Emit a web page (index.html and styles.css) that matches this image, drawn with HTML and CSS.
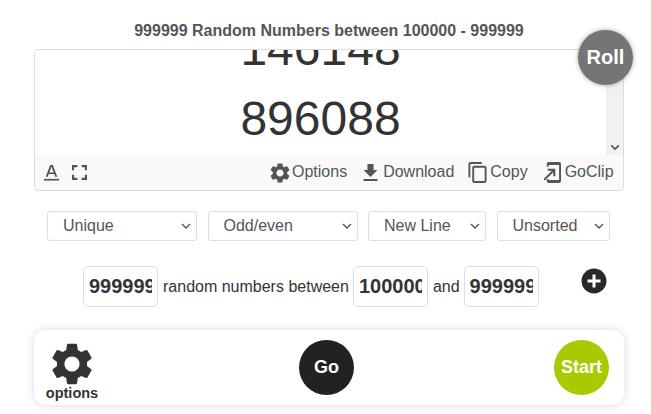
FILE: index.html
```html
<!DOCTYPE html>
<html lang="en">
<head>
    <meta charset="UTF-8">
    <meta name="viewport" content="width=device-width, initial-scale=1.0">
    <title>Random Numbers</title>
    <link rel="stylesheet" href="styles.css">
</head>
<body>
    <div class="page">
        <h1 class="title">999999 Random Numbers between 100000 - 999999</h1>

        <div class="result-card">
            <button class="roll">Roll</button>
            <div class="result-top">
                <div class="numbers">
                    <div>146148</div>
                    <div>896088</div>
                </div>
                <div class="scrollbar">
                    <svg class="scroll-arrow" viewBox="0 0 12 8"><path d="M1.5 1.5 6 6l4.5-4.5" fill="none" stroke="#555" stroke-width="2"/></svg>
                </div>
            </div>
            <div class="toolbar">
                <svg class="icon icon-font" viewBox="1 1 14 15"><path d="M6.8 1 2.6 12h1.900l.9-2.500h5.200l.9 2.500h1.900L9.200 1H6.800zM6 8l2-5.400L10 8H6z"/><path d="M1 14h14v1.600H1z"/></svg>
                <svg class="icon icon-full" viewBox="1 1 14 14"><path d="M1 1h5v2H3v3H1V1zm9 0h5v5h-2V3h-3V1zM1 10h2v3h3v2H1v-5zm12 0h2v5h-5v-2h3v-3z"/></svg>
                <div class="tool tool-first">
                    <svg class="icon icon-gear" viewBox="2 2 20 20"><path d="M19.14 12.94c.04-.3.06-.61.06-.94 0-.32-.02-.64-.07-.94l2.03-1.58c.18-.14.23-.41.12-.61l-1.92-3.32c-.12-.22-.37-.29-.59-.22l-2.39.96c-.5-.38-1.03-.7-1.62-.94L14.4 2.81c-.04-.24-.24-.41-.48-.41h-3.84c-.24 0-.43.17-.47.41L9.25 5.35c-.59.24-1.13.57-1.62.94l-2.39-.96c-.22-.08-.47 0-.59.22L2.74 8.87c-.12.21-.08.47.12.61l2.03 1.58c-.05.3-.09.63-.09.94s.02.64.07.94l-2.03 1.58c-.18.14-.23.41-.12.61l1.92 3.32c.12.22.37.29.59.22l2.39-.96c.5.38 1.03.7 1.62.94l.36 2.54c.05.24.24.41.48.41h3.84c.24 0 .44-.17.47-.41l.36-2.54c.59-.24 1.13-.56 1.62-.94l2.39.96c.22.08.47 0 .59-.22l1.92-3.32c.12-.22.07-.47-.12-.61l-2.01-1.58zM12 15.600c-1.980 0-3.600-1.620-3.600-3.600s1.620-3.600 3.600-3.600 3.600 1.620 3.600 3.600-1.620 3.600-3.600 3.600z"/></svg>
                    <span>Options</span>
                </div>
                <div class="tool tool-down">
                    <svg class="icon icon-down" viewBox="5 3 14 17"><path d="M19 9h-4V3H9v6H5l7 7 7-7zM5 18v2h14v-2H5z"/></svg>
                    <span>Download</span>
                </div>
                <div class="tool tool-copy">
                    <svg class="icon icon-copy" viewBox="2 1 19 22"><path d="M16 1H4c-1.100 0-2 .9-2 2v14h2V3h12V1zm3 4H8c-1.100 0-2 .9-2 2v14c0 1.100.9 2 2 2h11c1.100 0 2-.9 2-2V7c0-1.100-.9-2-2-2zm0 16H8V7h11v14z"/></svg>
                    <span>Copy</span>
                </div>
                <div class="tool">
                    <svg class="icon icon-clip" viewBox="0 0 19 22"><path d="M6 0h11c1.100 0 2 .9 2 2v18c0 1.100-.9 2-2 2H6c-1.100 0-2-.9-2-2v-2h2v1h11V3H6v2H4V2c0-1.100.9-2 2-2z"/><path d="M5 7h8v8h-2.200v-4.300L2 19.500.5 18l8.800-8.800H5V7z"/></svg>
                    <span>GoClip</span>
                </div>
            </div>
        </div>

        <div class="selects">
            <select class="select select-wide"><option>Unique</option></select>
            <select class="select select-wide"><option>Odd/even</option></select>
            <select class="select select-line"><option>New Line</option></select>
            <select class="select select-sort"><option>Unsorted</option></select>
        </div>

        <div class="range">
            <input class="num" type="text" value="999999">
            <span>random numbers between</span>
            <input class="num" type="text" value="100000">
            <span>and</span>
            <input class="num" type="text" value="999999">
            <svg class="plus" viewBox="0 0 26 26"><circle cx="13" cy="13" r="12.500" fill="#292929"/><path d="M6.500 11.500h5v-5h3v5h5v3h-5v5h-3v-5h-5z" fill="#fff"/></svg>
        </div>

        <div class="action-bar">
            <div class="options">
                <svg class="options-gear" viewBox="2 2 20 20"><path d="M19.14 12.94c.04-.3.06-.61.06-.94 0-.32-.02-.64-.07-.94l2.03-1.58c.18-.14.23-.41.12-.61l-1.92-3.32c-.12-.22-.37-.29-.59-.22l-2.39.96c-.5-.38-1.03-.7-1.62-.94L14.4 2.81c-.04-.24-.24-.41-.48-.41h-3.84c-.24 0-.43.17-.47.41L9.25 5.35c-.59.24-1.13.57-1.62.94l-2.39-.96c-.22-.08-.47 0-.59.22L2.74 8.87c-.12.21-.08.47.12.61l2.03 1.58c-.05.3-.09.63-.09.94s.02.64.07.94l-2.03 1.58c-.18.14-.23.41-.12.61l1.92 3.32c.12.22.37.29.59.22l2.39-.96c.5.38 1.03.7 1.62.94l.36 2.54c.05.24.24.41.48.41h3.84c.24 0 .44-.17.47-.41l.36-2.54c.59-.24 1.13-.56 1.62-.94l2.39.96c.22.08.47 0 .59-.22l1.92-3.32c.12-.22.07-.47-.12-.61l-2.01-1.58zM12 15.600c-1.980 0-3.600-1.620-3.600-3.600s1.620-3.600 3.600-3.600 3.600 1.620 3.600 3.600-1.620 3.600-3.600 3.600z"/></svg>
                <span>options</span>
            </div>
            <button class="round go">Go</button>
            <button class="round start">Start</button>
        </div>
    </div>
</body>
</html>
```

FILE: styles.css
```css
html, body {
    margin: 0;
    padding: 0;
    background: #fff;
    overflow: hidden;
}

body {
    font-family: "Liberation Sans", Arial, sans-serif;
    color: #333;
}

.page {
    width: 590px;
    min-height: 414px;
    margin-left: 34px;
}

.title {
    margin: 0;
    padding: 21px 50px 0 50px;
    height: 28px;
    font-size: 16px;
    line-height: 19px;
    font-weight: bold;
    text-align: center;
    color: #555;
}

.result-card {
    position: relative;
    height: 142px;
    box-sizing: border-box;
    border: 1px solid #ddd;
    border-radius: 4px;
    display: flex;
    flex-direction: column;
}

.roll {
    position: absolute;
    top: -20px;
    left: 543px;
    width: 55px;
    height: 55px;
    padding: 0;
    border: none;
    border-radius: 50%;
    background: #757575;
    color: #fff;
    font-family: inherit;
    font-size: 20px;
    font-weight: bold;
    box-shadow: 0 0 5px rgba(0, 0, 0, 0.35);
}

.result-top {
    height: 105px;
    display: flex;
}

.numbers {
    flex: 1;
    overflow: hidden;
    display: flex;
    flex-direction: column;
    justify-content: flex-end;
    align-items: center;
    padding-bottom: 1px;
    font-size: 48px;
    line-height: 70px;
    color: #333;
}

.scrollbar {
    width: 17px;
    background: #f1f1f1;
    display: flex;
    align-items: flex-end;
    justify-content: center;
}

.scroll-arrow {
    width: 10px;
    height: 7px;
    margin-bottom: 4px;
}

.toolbar {
    flex: 1;
    display: flex;
    align-items: center;
    padding-left: 9px;
    background: #f9f9f9;
    border-radius: 0 0 4px 4px;
    font-size: 16px;
    color: #555;
}

.icon {
    display: block;
    fill: #555;
    flex: none;
}

.icon-font {
    width: 15px;
    height: 16px;
    margin-right: 13px;
}

.icon-full {
    width: 15px;
    height: 15px;
}

.tool {
    display: flex;
    align-items: center;
    margin-left: 15px;
}

.tool-first {
    margin-left: 182.5px;
}

.tool-down {
    margin-left: 16px;
}

.tool-copy {
    margin-left: 14px;
}

.tool span {
    position: relative;
    top: -1px;
}

.icon-gear {
    width: 20px;
    height: 20px;
    margin-right: 2.5px;
}

.icon-down {
    width: 15px;
    height: 17px;
    margin-right: 5px;
}

.icon-copy {
    width: 19px;
    height: 21px;
    margin-right: 3px;
}

.icon-clip {
    width: 18px;
    height: 21px;
    margin-right: 4px;
}

.selects {
    display: flex;
    gap: 10.5px;
    margin-top: 20px;
    padding-left: 13px;
}

.select {
    appearance: none;
    height: 30px;
    box-sizing: border-box;
    padding: 0 0 2px 15px;
    border: 1px solid #ddd;
    border-radius: 3px;
    background: #fff url("data:image/svg+xml,%3Csvg xmlns='http://www.w3.org/2000/svg' width='10' height='6'%3E%3Cpath d='M1 1l4 4 4-4' fill='none' stroke='%23555' stroke-width='1.400'/%3E%3C/svg%3E") no-repeat right 5px center;
    color: #555;
    font-family: inherit;
    font-size: 16px;
}

.select-wide {
    width: 150px;
}

.select-line {
    width: 118px;
}

.select-sort {
    width: 113px;
}

.range {
    position: relative;
    display: flex;
    align-items: center;
    gap: 5px;
    margin-top: 25px;
    padding-left: 49px;
    font-size: 16px;
    color: #333;
}

.range span {
    margin-right: -1px;
}

.num {
    width: 75px;
    height: 41px;
    box-sizing: border-box;
    padding: 0 5px;
    border: 1px solid #ddd;
    border-radius: 5px;
    font-family: inherit;
    font-size: 20px;
    font-weight: bold;
    color: #333;
}

.plus {
    position: absolute;
    left: 547px;
    top: 2px;
    width: 26px;
    height: 26px;
}

.action-bar {
    height: 75px;
    margin-top: 23px;
    display: flex;
    align-items: center;
    padding: 0 15px 0 11px;
    background: #fff;
    border-radius: 12px;
    box-shadow: 0 0 10px rgba(0, 0, 0, 0.15);
}

.options {
    width: 54px;
    display: flex;
    flex-direction: column;
    align-items: center;
    font-size: 14.5px;
    font-weight: bold;
    color: #333;
    margin-top: 8px;
}

.options-gear {
    width: 42px;
    height: 42px;
    fill: #333;
}

.round {
    width: 55px;
    height: 55px;
    padding: 0;
    border: none;
    border-radius: 50%;
    color: #fff;
    font-family: inherit;
    font-size: 18px;
    font-weight: bold;
}

.go {
    margin-left: 200px;
    background: #222;
}

.start {
    margin-left: auto;
    background: #a9c900;
}
```
